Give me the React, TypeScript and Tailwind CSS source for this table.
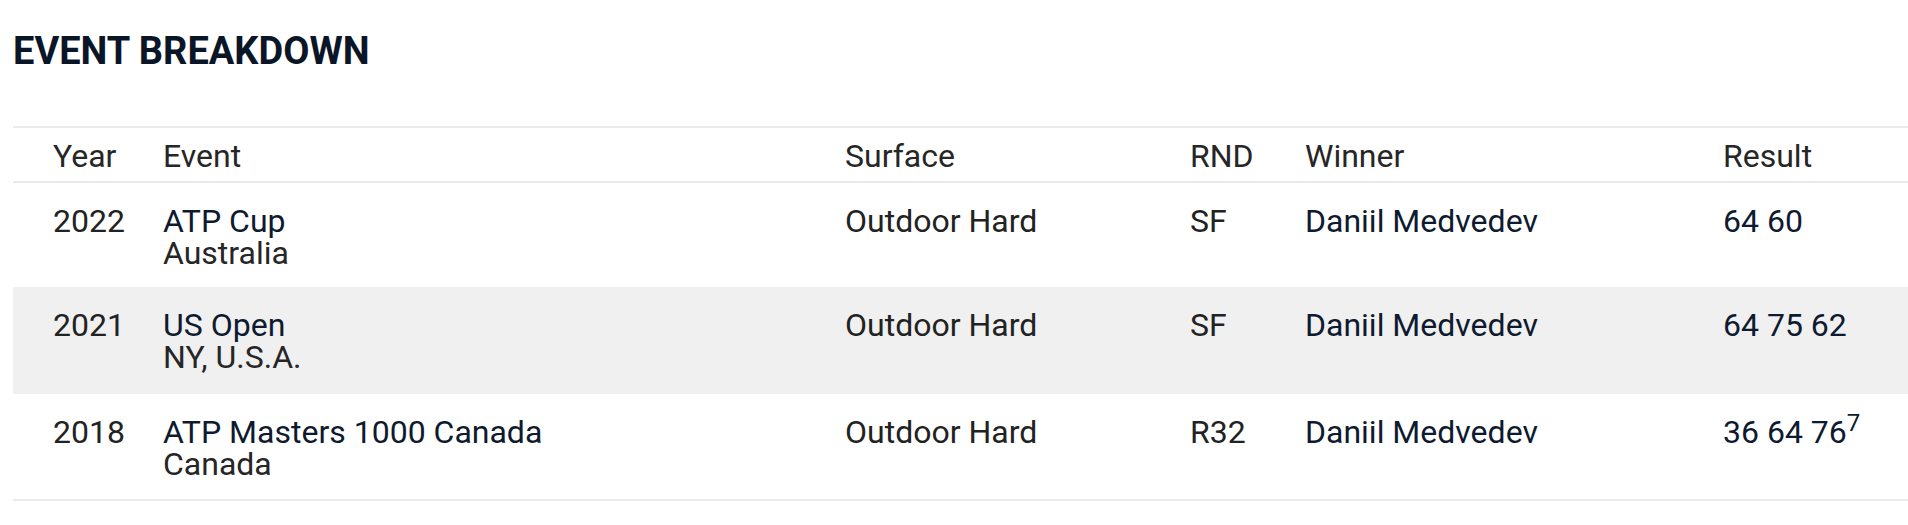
const rows = [
  { year: "2022", event: "ATP Cup", place: "Australia", surface: "Outdoor Hard", rnd: "SF", winner: "Daniil Medvedev", result: "64 60", tb: "", h: "h-[104px]" },
  { year: "2021", event: "US Open", place: "NY, U.S.A.", surface: "Outdoor Hard", rnd: "SF", winner: "Daniil Medvedev", result: "64 75 62", tb: "", h: "h-[107px] bg-[#f0f0f0]" },
  { year: "2018", event: "ATP Masters 1000 Canada", place: "Canada", surface: "Outdoor Hard", rnd: "R32", winner: "Daniil Medvedev", result: "36 64 76", tb: "7", h: "h-[107px] border-b-2 border-[#ebebeb]" },
];

const cols = "grid grid-cols-[110px_682px_345px_115px_418px_1fr] pl-[40px]";

export default function App() {
  return (
    <div className="min-h-[525px] bg-white pl-[13px] font-['Roboto',sans-serif]">
      <h2 className="pt-[29px] text-[38px] font-bold leading-[44px] text-[#0b1528]">EVENT BREAKDOWN</h2>

      <div className="mt-[53px] border-t-2 border-[#ebebeb]">
        {/* header */}
        <div className={cols + " border-b-2 border-[#ebebeb] pt-[12px] pb-[9px] text-[32px] leading-8 text-[#262626]"}>
          <span>Year</span>
          <span>Event</span>
          <span>Surface</span>
          <span>RND</span>
          <span>Winner</span>
          <span>Result</span>
        </div>

        {rows.map((r) => (
          <div key={r.year} className={cols + " pt-[22px] text-[32px] leading-8 " + r.h}>
            <span className="text-[#222]">{r.year}</span>
            <div>
              <p className="text-[#0e1a2f]">{r.event}</p>
              <p className="text-[#262626]">{r.place}</p>
            </div>
            <span className="text-[#222]">{r.surface}</span>
            <span className="text-[#222]">{r.rnd}</span>
            <span className="text-[#0e1a2f]">{r.winner}</span>
            <span className="text-[#0e1a2f]">
              {r.result}
              {r.tb && <sup>{r.tb}</sup>}
            </span>
          </div>
        ))}
      </div>
    </div>
  );
}
